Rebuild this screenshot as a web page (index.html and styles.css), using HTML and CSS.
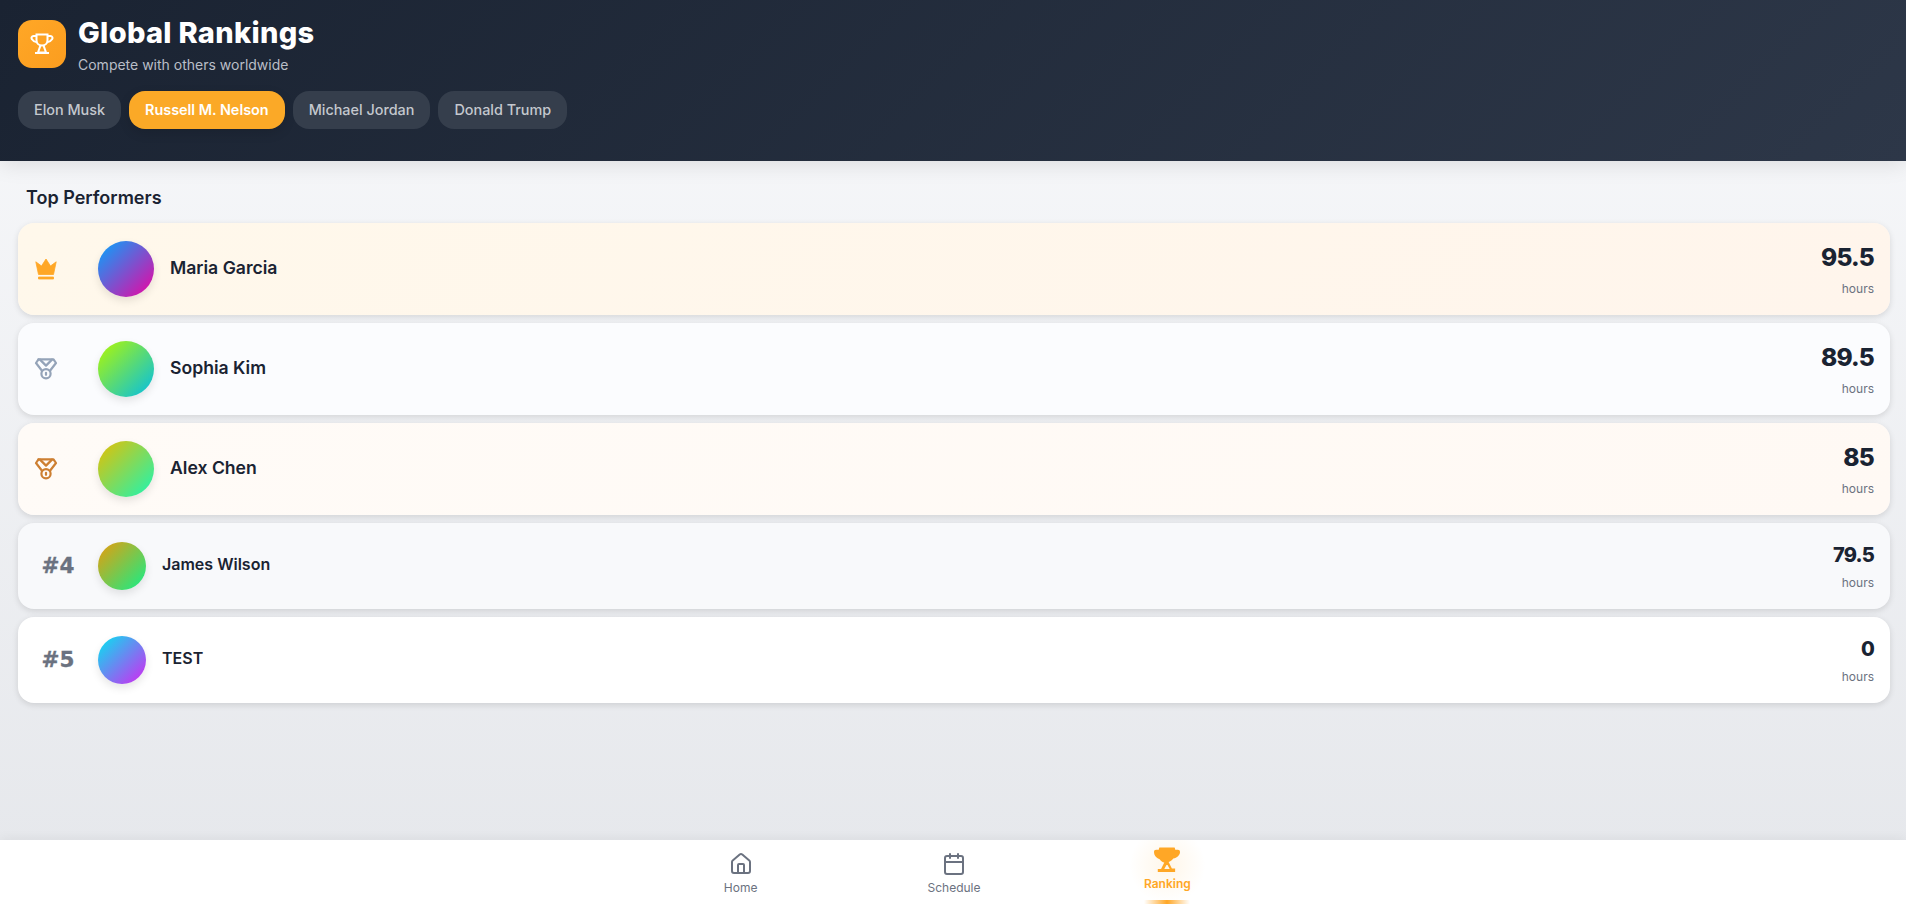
FILE: index.html
```html
<!DOCTYPE html>
<html lang="en">
<head>
<meta charset="utf-8">
<title>Global Rankings</title>
<link rel="stylesheet" href="styles.css">
</head>
<body>
<div class="app">
  <header class="header">
    <div class="brand">
      <div class="brand-icon">
        <svg viewBox="0 0 24 24" class="trophy-line"><path d="M6.500 2.500h11v5.500c0 3.500-2.500 5.500-5.500 5.500S6.500 11.500 6.500 8z"/><path d="M6.500 4H3.500a2 2 0 0 0-1.500 3.300C3 9 5 10 7 10.300"/><path d="M17.500 4h3a2 2 0 0 1 1.500 3.300C21 9 19 10 17 10.300"/><path d="M10.500 13.300 8 20.500h8l-2.500-7.200"/><path d="M5 21h14"/></svg>
      </div>
      <div class="brand-text">
        <h1 class="title">Global Rankings</h1>
        <p class="subtitle">Compete with others worldwide</p>
      </div>
    </div>
    <div class="chips">
      <button class="chip">Elon Musk</button>
      <button class="chip chip-active">Russell M. Nelson</button>
      <button class="chip">Michael Jordan</button>
      <button class="chip">Donald Trump</button>
    </div>
  </header>

  <main class="main">
    <h2 class="section-title">Top Performers</h2>
    <div class="list">
      <div class="card card-top card-gold">
        <div class="rank"><svg viewBox="0 0 24 24" class="rank-icon crown"><path d="M12 2 16.500 9 22.200 4.800 19.500 17.500H4.500L1.800 4.800 7.500 9z"/><path d="M4.500 20h15v2H4.500z"/></svg></div>
        <div class="avatar avatar-1"></div>
        <div class="name">Maria Garcia</div>
        <div class="score"><div class="value">95.5</div><div class="unit">hours</div></div>
      </div>
      <div class="card card-top card-silver">
        <div class="rank"><svg viewBox="0 0 24 24" class="rank-icon medal medal-silver"><path d="M4.500 2.300h15l2.500 3.700-5.800 7.500"/><path d="M7.800 13.500 2 6l2.500-3.700"/><path d="M6 2.600l6 6 6-6"/><circle cx="12" cy="16.800" r="4.600"/><path d="M12 15.800v2"/></svg></div>
        <div class="avatar avatar-2"></div>
        <div class="name">Sophia Kim</div>
        <div class="score"><div class="value">89.5</div><div class="unit">hours</div></div>
      </div>
      <div class="card card-top card-bronze">
        <div class="rank"><svg viewBox="0 0 24 24" class="rank-icon medal medal-bronze"><path d="M4.500 2.300h15l2.500 3.700-5.800 7.500"/><path d="M7.800 13.500 2 6l2.500-3.700"/><path d="M6 2.600l6 6 6-6"/><circle cx="12" cy="16.800" r="4.600"/><path d="M12 15.800v2"/></svg></div>
        <div class="avatar avatar-3"></div>
        <div class="name">Alex Chen</div>
        <div class="score"><div class="value">85</div><div class="unit">hours</div></div>
      </div>
      <div class="card card-plain card-grey">
        <div class="rank rank-num">#4</div>
        <div class="avatar avatar-4"></div>
        <div class="name">James Wilson</div>
        <div class="score"><div class="value">79.5</div><div class="unit">hours</div></div>
      </div>
      <div class="card card-plain card-white">
        <div class="rank rank-num">#5</div>
        <div class="avatar avatar-5"></div>
        <div class="name">TEST</div>
        <div class="score"><div class="value">0</div><div class="unit">hours</div></div>
      </div>
    </div>
  </main>

  <nav class="nav">
    <div class="nav-inner">
      <a class="nav-item">
        <svg viewBox="0 0 24 24" class="nav-icon"><path d="M15 21v-8a1 1 0 0 0-1-1h-4a1 1 0 0 0-1 1v8"/><path d="M3 10a2 2 0 0 1 .709-1.528l7-5.999a2 2 0 0 1 2.582 0l7 5.999A2 2 0 0 1 21 10v9a2 2 0 0 1-2 2H5a2 2 0 0 1-2-2z"/></svg>
        <span>Home</span>
      </a>
      <a class="nav-item">
        <svg viewBox="0 0 24 24" class="nav-icon"><path d="M8 2v4"/><path d="M16 2v4"/><rect x="3" y="4" width="18" height="18" rx="2"/><path d="M3 10h18"/></svg>
        <span>Schedule</span>
      </a>
      <a class="nav-item nav-active">
        <svg viewBox="0 0 24 24" class="nav-trophy"><path fill-rule="evenodd" d="M5 .5h14c.3.7.5 1.300.6 2H22c1.300 0 2 .8 2 2.200 0 3-2.800 5.600-6.200 6-1.200 1.800-2.800 2.900-4.300 3.200l3 6h3V23H3.500v-2.600h3l3-6c-1.500-.3-3.100-1.400-4.300-3.200C2.800 10.800 0 8.200 0 4.700 0 3.300.7 2.500 2 2.500h2.400c.1-.7.3-1.300.6-2zM11.500 16.500l-2 3.900h5l-2-3.900z"/></svg>
        <span>Ranking</span>
      </a>
    </div>
  </nav>
</div>
</body>
</html>
```

FILE: styles.css
```css
* { box-sizing: border-box; margin: 0; padding: 0; }
html, body { height: 100%; }
body {
  font-family: Inter, "Liberation Sans", sans-serif;
  color: #1a2332;
  overflow: hidden;
}
.app {
  height: 904px;
  display: flex;
  flex-direction: column;
  background: linear-gradient(180deg, #f8f9fb 0%, #e5e7eb 100%);
}
.header {
  height: 161px;
  flex: none;
  padding: 12px 16px 0 18px;
  background: linear-gradient(135deg, #1a2332 0%, #2d3748 100%);
  box-shadow: 0 4px 20px rgba(0, 0, 0, 0.1);
  position: relative;
  z-index: 2;
}
.brand { display: flex; align-items: center; gap: 12px; }
.brand-icon {
  width: 48px;
  height: 48px;
  border-radius: 14px;
  display: flex;
  align-items: center;
  justify-content: center;
  background: linear-gradient(135deg, #ffa726 0%, #fb9d1f 100%);
}
.trophy-line {
  width: 24px;
  height: 24px;
  fill: none;
  stroke: #fff;
  stroke-width: 2;
}
.title {
  font-size: 29px;
  line-height: 42px;
  font-weight: 800;
  color: #fff;
  letter-spacing: 0.3px;
}
.subtitle {
  font-size: 14px;
  line-height: 21px;
  color: #b9bec7;
}
.chips { display: flex; gap: 8px; margin-top: 16px; }
.chip {
  height: 38px;
  padding: 0 16px 1px;
  border: none;
  border-radius: 16px;
  font-family: Inter, "Liberation Sans", sans-serif;
  font-size: 14.4px;
  font-weight: 500;
  color: #c4c8ce;
  background: #353e4c;
}
.chip-active {
  background: #fba927;
  color: #fff;
  font-weight: 600;
  box-shadow: 0 4px 12px rgba(0, 0, 0, 0.12);
}
.main { flex: 1; padding: 24px 16px 0 18px; }
.section-title {
  font-size: 18px;
  line-height: 26px;
  font-weight: 600;
  margin: 0 0 12px 8px;
}
.list { display: flex; flex-direction: column; gap: 8px; }
.card {
  display: flex;
  align-items: center;
  border-radius: 16px;
  padding: 0 16px;
  box-shadow: 0 2px 6px rgba(0, 0, 0, 0.12);
}
.card-top { height: 92px; }
.card-plain { height: 86px; }
.card-gold { background: linear-gradient(135deg, #fff8eb 0%, #fff5ec 100%); }
.card-silver { background: #fbfcfe; }
.card-bronze { background: linear-gradient(135deg, #fffbf7 0%, #fff9f4 100%); }
.card-grey { background: #f8f9fb; }
.card-white { background: #fff; }
.rank { width: 48px; flex: none; margin-right: 16px; }
.rank-num {
  font-family: "DejaVu Sans", Inter, sans-serif;
  font-size: 21.5px;
  line-height: 32px;
  font-weight: 700;
  color: #6b7280;
  text-align: center;
  -webkit-text-stroke: 0.3px #6b7280;
}
.rank-icon { display: block; width: 24px; height: 24px; }
.crown { fill: #ffa726; stroke: #ffa726; stroke-width: 0.8; stroke-linejoin: round; }
.medal { fill: none; stroke-width: 2.2; stroke-linejoin: round; stroke-linecap: round; }
.medal-silver { stroke: #94a3b8; }
.medal-bronze { stroke: #cd7f32; }
.avatar {
  border-radius: 50%;
  flex: none;
  box-shadow: 0 4px 8px rgba(0, 0, 0, 0.1);
}
.card-top .avatar { width: 56px; height: 56px; }
.card-plain .avatar { width: 48px; height: 48px; }
.avatar-1 { background: linear-gradient(135deg, #00a8ff, #f000a0); }
.avatar-2 { background: linear-gradient(135deg, #b4f800, #00bde8); }
.avatar-3 { background: linear-gradient(135deg, #e8be00, #19f6b6); }
.avatar-4 { background: linear-gradient(135deg, #eb9b0a, #10f08b); }
.avatar-5 { background: linear-gradient(135deg, #00e8f0, #d823f2); }
.name { flex: 1; margin-left: 16px; font-weight: 600; margin-top: -4px; }
.card-top .name { font-size: 17.6px; line-height: 27px; }
.card-plain .name { font-size: 16px; line-height: 24px; }
.score { text-align: right; }
.value { font-weight: 800; letter-spacing: -0.8px; }
.card-top .value { font-size: 24.5px; line-height: 36px; margin-bottom: 4px; }
.card-plain .value { font-size: 20px; line-height: 30px; margin-top: 1px; margin-bottom: 3px; }
.unit { font-size: 12px; line-height: 20px; color: #6b7280; }
.nav {
  height: 64px;
  flex: none;
  background: #fff;
  box-shadow: 0 -2px 10px rgba(0, 0, 0, 0.05);
  position: relative;
  z-index: 2;
}
.nav-inner {
  width: 640px;
  height: 100%;
  margin: 0 auto;
  display: flex;
  transform: translateX(1px);
}
.nav-item {
  flex: 1;
  display: flex;
  flex-direction: column;
  align-items: center;
  padding-top: 12px;
  font-size: 12px;
  line-height: 18px;
  font-weight: 400;
  color: #6b7280;
  position: relative;
}
.nav-icon {
  width: 24px;
  height: 24px;
  margin-bottom: 3px;
  fill: none;
  stroke: #6b7280;
  stroke-width: 2;
  stroke-linecap: round;
  stroke-linejoin: round;
}
.nav-active {
  color: #ffa726;
  font-weight: 600;
  padding-top: 7px;
  background: radial-gradient(circle at 50% 40%, rgba(255, 167, 38, 0.1) 0, rgba(255, 167, 38, 0) 38px);
}
.nav-trophy { width: 26px; height: 26px; fill: #ffa726; margin-bottom: 2px; }
.nav-active::after {
  content: "";
  position: absolute;
  left: 50%;
  bottom: 0;
  width: 46px;
  height: 4px;
  margin-left: -23px;
  background: linear-gradient(90deg, rgba(255, 167, 38, 0), #ffa726, rgba(255, 167, 38, 0));
}
```
